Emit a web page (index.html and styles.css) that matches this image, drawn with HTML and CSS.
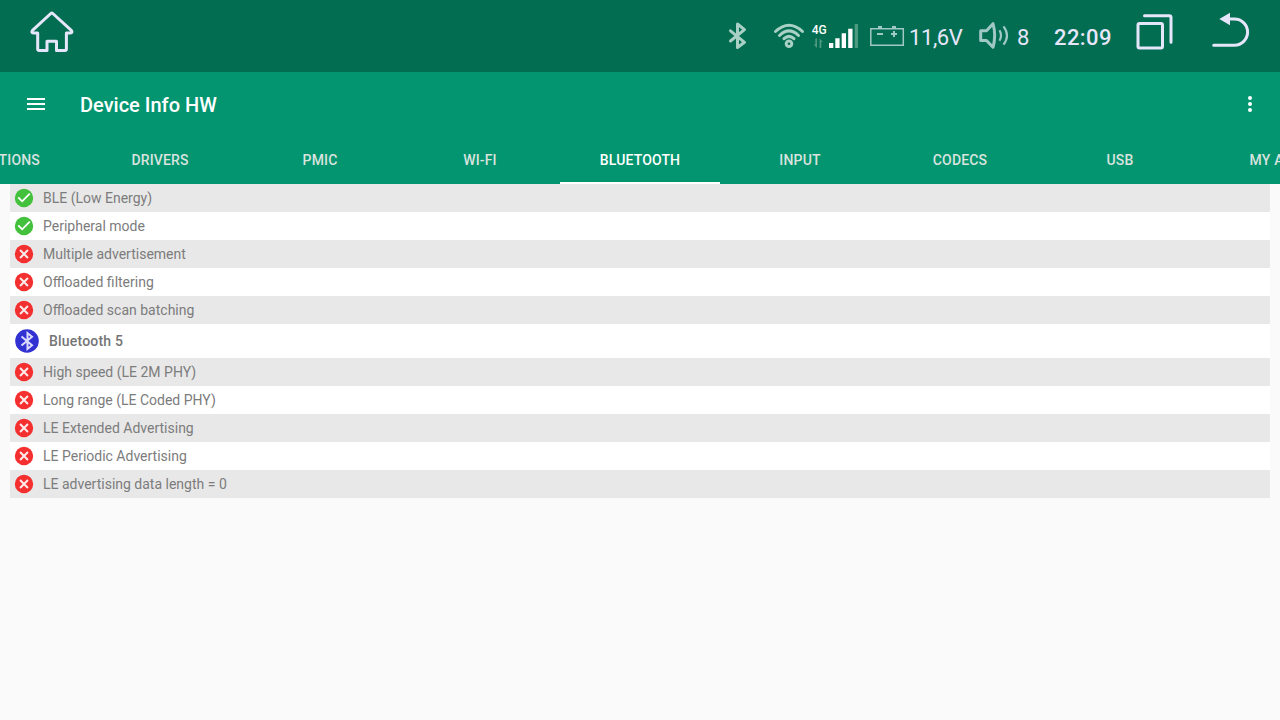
FILE: index.html
```html
<!DOCTYPE html>
<html lang="en">
<head>
    <meta charset="UTF-8">
    <meta name="viewport" content="width=device-width, initial-scale=1.0">
    <title>Device Info HW</title>
    <link rel="stylesheet" href="styles.css">
</head>
<body>
    <!-- shared row icons -->
    <svg class="defs">
        <symbol id="yes" viewBox="0 0 24 24">
            <circle cx="12" cy="12" r="10" fill="#44c13c"/>
            <path fill="none" stroke="#fff" stroke-width="2" d="M5.700 11.300L10 15.600L18.300 7.300"/>
        </symbol>
        <symbol id="no" viewBox="0 0 24 24">
            <circle cx="12" cy="12" r="10" fill="#f42f30"/>
            <path stroke="#fff" stroke-opacity=".9" stroke-width="2.2" d="M7.700 7.700l8.600 8.600M16.300 7.700l-8.600 8.600"/>
        </symbol>
    </svg>

    <div class="status-bar">
        <svg class="home" width="48" height="72" viewBox="28 0 48 72">
            <path class="line" d="M50.800 13.500Q51.800 12.600 52.800 13.500L71.300 30.300Q73 32.800 70.300 33H66.400V49Q66.400 50.500 64.900 50.500H56.500V41.300H47V50.500H39.200Q37.700 50.500 37.700 49V33H33.500Q30.800 32.800 32.500 30.300Z"/>
        </svg>
        <svg class="bluetooth" width="24" height="72" viewBox="726 0 24 72">
            <path class="dim" d="M730.500 30.800L744.500 42.300L737.500 47.500V24L744.500 29.600L730.500 41"/>
        </svg>
        <svg class="wifi" width="34" height="72" viewBox="772 0 34 72">
            <circle class="dim" cx="789" cy="43.700" r="2.800"/>
            <path class="dim" d="M775.500 31.500Q789 19.100 802.500 31.500M779.500 35.500Q789 26.400 798.500 35.500M784 38.700Q789 33.900 794 38.700"/>
        </svg>
        <svg class="signal" width="50" height="72" viewBox="810 0 50 72">
            <text class="net" x="811.800" y="34">4G</text>
            <path fill="#4d9a80" d="M815.300 38.500h1.700v9.500l-3.400-3.400h1.700zM819.600 48v-9.500l3.400 3.400h-1.700v6.100z"/>
            <path fill="#fff" d="M829 43h4.300v5H829zM835.300 38.300h4.300V48h-4.300zM841.700 33.300h4.300V48h-4.300zM848.200 28.700h4.300V48h-4.300z"/>
            <path fill="#4d9a80" d="M854.700 24h3.300v24h-3.300z"/>
        </svg>
        <svg class="battery" width="38" height="72" viewBox="868 0 38 72">
            <path fill="none" stroke="#a0c8c4" stroke-width="1.500" d="M870.800 28.700h32.500v16.600h-32.500z"/>
            <path fill="#a0c8c4" d="M878 26h4v2h-4zM892 26h4v2h-4zM877 33h6v2h-6zM891 33h6v2h-6zM893 31h2v6h-2z"/>
        </svg>
        <span class="volts">11,6V</span>
        <svg class="volume" width="34" height="72" viewBox="977 0 34 72">
            <path fill="none" stroke="#a0c8c4" stroke-width="3" stroke-linejoin="round" d="M980.700 30.700H986.500L993 23.700Q996.400 35.500 993 47.300L986.500 40.500H980.700Z"/>
            <path fill="none" stroke="#a0c8c4" stroke-width="2.200" d="M999.500 30.300Q1002.500 35.500 999.500 40.700M1003.500 26.300Q1010.500 35.500 1003.500 44.700"/>
        </svg>
        <span class="level">8</span>
        <span class="clock">22:09</span>
        <svg class="recents" width="42" height="72" viewBox="1134 0 42 72">
            <rect class="line" x="1138" y="23.500" width="24.500" height="24.500" rx="1.500"/>
            <path class="line" d="M1144.500 15.700H1169.300Q1171 15.700 1171 17.500V42.300"/>
        </svg>
        <svg class="back" width="42" height="72" viewBox="1210 0 42 72">
            <path class="line" d="M1213.700 45.200H1234.500A13.100 13.100 0 0 0 1234.500 19H1228"/>
            <path fill="#e6e6fa" d="M1219.300 19L1230 12.800V25.200Z"/>
        </svg>
    </div>

    <header class="app-bar">
        <svg width="24" height="24" viewBox="0 0 24 24"><path fill="#fff" d="M3 18h18v-2H3v2zm0-5h18v-2H3v2zm0-7v2h18V6H3z"/></svg>
        <h1>Device Info HW</h1>
        <svg width="24" height="24" viewBox="0 0 24 24" fill="#fff"><circle cx="12" cy="6" r="2"/><circle cx="12" cy="12" r="2"/><circle cx="12" cy="18" r="2"/></svg>
    </header>

    <!-- tab strip is scrolled, first and last tabs are half visible -->
    <nav class="tabs">
        <div class="tab">PARTITIONS</div>
        <div class="tab">DRIVERS</div>
        <div class="tab">PMIC</div>
        <div class="tab">WI-FI</div>
        <div class="tab active">BLUETOOTH</div>
        <div class="tab">INPUT</div>
        <div class="tab">CODECS</div>
        <div class="tab">USB</div>
        <div class="tab">MY APPS</div>
    </nav>

    <main class="list">
        <div class="row shaded"><svg><use href="#yes"/></svg>BLE (Low Energy)</div>
        <div class="row"><svg><use href="#yes"/></svg>Peripheral mode</div>
        <div class="row shaded"><svg><use href="#no"/></svg>Multiple advertisement</div>
        <div class="row"><svg><use href="#no"/></svg>Offloaded filtering</div>
        <div class="row shaded"><svg><use href="#no"/></svg>Offloaded scan batching</div>
        <div class="row title">
            <svg viewBox="0 0 24 24">
                <circle cx="12" cy="12" r="11.800" fill="#3232d2"/>
                <path fill="none" stroke="#dcdcff" stroke-width="2" d="M6.500 7.500L17 16.300L12.500 20V4L17 7.700L6.500 16.500"/>
            </svg>
            Bluetooth 5
        </div>
        <div class="row shaded"><svg><use href="#no"/></svg>High speed (LE 2M PHY)</div>
        <div class="row"><svg><use href="#no"/></svg>Long range (LE Coded PHY)</div>
        <div class="row shaded"><svg><use href="#no"/></svg>LE Extended Advertising</div>
        <div class="row"><svg><use href="#no"/></svg>LE Periodic Advertising</div>
        <div class="row shaded"><svg><use href="#no"/></svg>LE advertising data length = 0</div>
    </main>
</body>
</html>
```
FILE: styles.css
```css
body {
    font-family: Roboto, sans-serif;
    margin: 0;
    background-color: #fafafa;
    overflow: hidden;
}

.defs {
    display: none;
}

/* status bar */
.status-bar {
    display: flex;
    height: 72px;
    padding: 0 28px;
    background-color: #026d51;
    color: #e6e6fa;
    font-size: 22px;
    line-height: 75px;
}

.status-bar svg,
.status-bar span {
    flex: none;
}

.line {
    fill: none;
    stroke: #e6e6fa;
    stroke-width: 3;
    stroke-linecap: round;
    stroke-linejoin: round;
}

.dim {
    fill: none;
    stroke: #a9d0c4;
    stroke-width: 3;
    stroke-linecap: round;
    stroke-linejoin: round;
}

.net {
    fill: #fff;
    font-size: 12px;
    font-weight: 500;
    letter-spacing: -0.2px;
}

.home {
    margin-right: auto;
}

.bluetooth {
    margin-right: 22px;
}

.wifi {
    margin-right: 4px;
}

.signal {
    margin-right: 8px;
}

.battery {
    margin-right: 3px;
}

.volts {
    width: 68px;
    letter-spacing: -0.4px;
}

.volume {
    margin-right: 6px;
}

.level {
    width: 37px;
}

.clock {
    width: 80px;
    font-weight: 500;
    letter-spacing: 0.4px;
}

.recents {
    margin-right: 34px;
}

/* app bar */
.app-bar {
    display: flex;
    align-items: center;
    height: 64px;
    padding: 0 18px 0 24px;
    background-color: #03956f;
    color: #fff;
}

.app-bar h1 {
    flex: 1;
    margin: 2px 0 0 32px;
    font-size: 20px;
    font-weight: 500;
}

/* tabs */
.tabs {
    display: flex;
    justify-content: center;
    height: 48px;
    overflow: hidden;
    background-color: #03956f;
}

.tab {
    flex: 0 0 160px;
    box-sizing: border-box;
    border-bottom: 2px solid transparent;
    color: #d9e3df;
    font-size: 14px;
    font-weight: 500;
    line-height: 49px;
    letter-spacing: 0.15px;
    text-align: center;
}

.tab.active {
    border-color: #fff;
    color: #fff;
}

/* feature list */
.list {
    margin: 0 10px;
}

.row {
    display: flex;
    align-items: center;
    gap: 8px;
    height: 28px;
    padding-left: 3px;
    background-color: #fff;
    color: #7c7c7c;
    font-size: 14px;
}

.row svg {
    width: 22px;
    height: 22px;
}

.row.shaded {
    background-color: #e8e8e8;
}

.row.title {
    gap: 10px;
    height: 34px;
    padding-left: 5px;
    color: #757575;
    font-weight: 500;
    letter-spacing: 0.2px;
}

.row.title svg {
    width: 24px;
    height: 24px;
}
```
